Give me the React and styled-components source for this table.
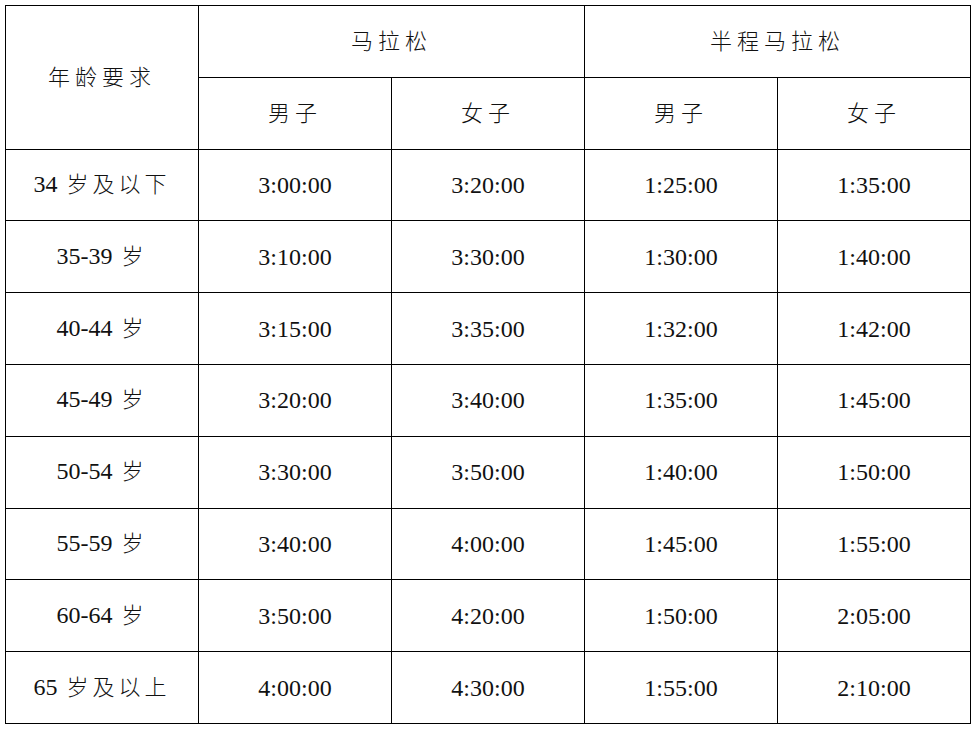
import React from 'react';
import styled, { createGlobalStyle } from 'styled-components';

const rows = [
  ['34 岁及以下', '3:00:00', '3:20:00', '1:25:00', '1:35:00'],
  ['35-39 岁', '3:10:00', '3:30:00', '1:30:00', '1:40:00'],
  ['40-44 岁', '3:15:00', '3:35:00', '1:32:00', '1:42:00'],
  ['45-49 岁', '3:20:00', '3:40:00', '1:35:00', '1:45:00'],
  ['50-54 岁', '3:30:00', '3:50:00', '1:40:00', '1:50:00'],
  ['55-59 岁', '3:40:00', '4:00:00', '1:45:00', '1:55:00'],
  ['60-64 岁', '3:50:00', '4:20:00', '1:50:00', '2:05:00'],
  ['65 岁及以上', '4:00:00', '4:30:00', '1:55:00', '2:10:00'],
];

const GlobalStyle = createGlobalStyle`
  body {
    margin: 0;
    padding: 5px;
    background: #fff;
  }
`;

const Table = styled.table`
  border-collapse: collapse;
  table-layout: fixed;
  width: 965px;
  color: #111;
`;

const Cell = styled.td`
  box-sizing: border-box;
  border: 1px solid #000;
  height: 71.8px;
  padding: 0;
  text-align: center;
  vertical-align: middle;
  font-family: 'Liberation Serif', serif;
  font-size: 24px;
  line-height: 1;
`;

const HeadCell = styled(Cell)`
  font-family: 'Noto Sans CJK SC', sans-serif;
  font-weight: 300;
  font-size: 22px;
  letter-spacing: 5px;
  padding-bottom: 5px;
`;

const AgeCell = styled(Cell)`
  padding-bottom: 3px;
`;

const Han = styled.span`
  margin-left: 3px;
  font-family: 'Noto Sans CJK SC', sans-serif;
  font-weight: 300;
  font-size: 22px;
  letter-spacing: 4px;
`;

const renderAge = (label) => {
  const idx = label.indexOf(' ');
  return (
    <>
      {label.slice(0, idx)} <Han>{label.slice(idx + 1)}</Han>
    </>
  );
};

export default function App() {
  return (
    <>
      <GlobalStyle />
      <Table>
        <colgroup>
          <col style={{ width: 193 }} />
          <col style={{ width: 193 }} />
          <col style={{ width: 193 }} />
          <col style={{ width: 193 }} />
          <col style={{ width: 193 }} />
        </colgroup>
        <tbody>
          <tr>
            <HeadCell rowSpan={2}>年龄要求</HeadCell>
            <HeadCell colSpan={2}>马拉松</HeadCell>
            <HeadCell colSpan={2}>半程马拉松</HeadCell>
          </tr>
          <tr>
            <HeadCell>男子</HeadCell>
            <HeadCell>女子</HeadCell>
            <HeadCell>男子</HeadCell>
            <HeadCell>女子</HeadCell>
          </tr>
          {rows.map(([age, ...times]) => (
            <tr key={age}>
              <AgeCell>{renderAge(age)}</AgeCell>
              {times.map((t, i) => (
                <Cell key={i}>{t}</Cell>
              ))}
            </tr>
          ))}
        </tbody>
      </Table>
    </>
  );
}
